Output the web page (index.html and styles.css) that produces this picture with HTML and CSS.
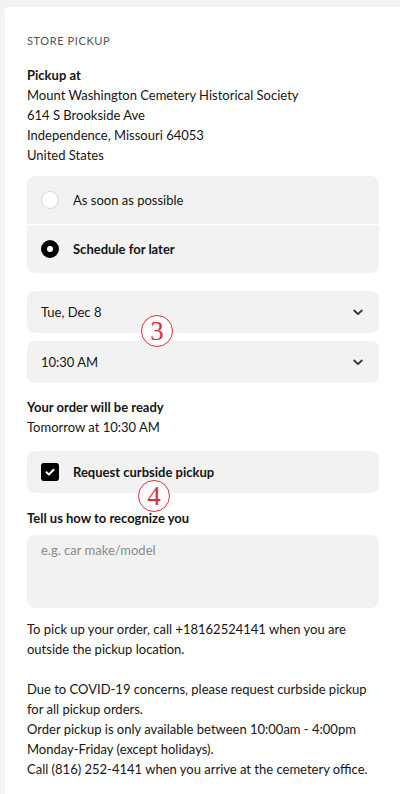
FILE: index.html
```html
<!DOCTYPE html>
<html lang="en">
<head>
  <meta charset="UTF-8">
  <title>Store Pickup</title>
  <link rel="stylesheet" href="styles.css">
</head>
<body>
  <div class="card">
    <div class="eyebrow">STORE PICKUP</div>

    <div class="address">
      <div class="strong">Pickup at</div>
      <div>Mount Washington Cemetery Historical Society</div>
      <div>614 S Brookside Ave</div>
      <div>Independence, Missouri 64053</div>
      <div>United States</div>
    </div>

    <div class="radios">
      <div class="radio-row">
        <span class="radio"></span>
        <span>As soon as possible</span>
      </div>
      <div class="radio-row">
        <span class="radio checked"></span>
        <span class="strong">Schedule for later</span>
      </div>
    </div>

    <div class="select">
      <span>Tue, Dec 8</span>
      <svg width="10" height="7" viewBox="0 0 10 7"><path d="M1.2 1.5l3.8 3.6 3.8-3.6" fill="none" stroke="#333" stroke-width="1.8" stroke-linecap="round" stroke-linejoin="round"/></svg>
    </div>
    <div class="select second">
      <span>10:30 AM</span>
      <svg width="10" height="7" viewBox="0 0 10 7"><path d="M1.2 1.5l3.8 3.6 3.8-3.6" fill="none" stroke="#333" stroke-width="1.8" stroke-linecap="round" stroke-linejoin="round"/></svg>
    </div>

    <div class="ready">
      <div class="strong">Your order will be ready</div>
      <div>Tomorrow at 10:30 AM</div>
    </div>

    <div class="check-row">
      <span class="checkbox">
        <svg width="18" height="18" viewBox="0 0 18 18"><path d="M5.5 9.3l2.4 2.3 4.6-4.9" fill="none" stroke="#fff" stroke-width="2" stroke-linecap="round" stroke-linejoin="round"/></svg>
      </span>
      <span class="strong">Request curbside pickup</span>
    </div>

    <div class="label strong">Tell us how to recognize you</div>
    <div class="textarea">e.g. car make/model</div>

    <p class="note">To pick up your order, call +18162524141 when you are outside the pickup location.</p>
    <p class="note">Due to COVID-19 concerns, please request curbside pickup for all pickup orders.<br>
      Order pickup is only available between 10:00am - 4:00pm Monday-Friday (except holidays).<br>
      Call (816) 252-4141 when you arrive at the cemetery office.</p>
  </div>

  <span class="mark mark-3">3</span>
  <span class="mark mark-4">4</span>
</body>
</html>
```

FILE: styles.css
```css
body {
  margin: 0;
  background: #f3f3f3;
  font-family: "Lato", "Liberation Sans", sans-serif;
  font-size: 13px;
  line-height: 20px;
  color: #151515;
}
.card {
  margin: 7px 0 0 5px;
  padding: 27px 21px 20px 22px;
  background: #fff;
  border-radius: 4px 0 0 0;
}
.eyebrow {
  font-size: 11px;
  line-height: 14px;
  letter-spacing: 0.6px;
  color: #555;
}
.strong {
  font-weight: 700;
}
.address {
  margin-top: 17px;
}
.radios {
  margin-top: 11px;
  background: #f2f2f2;
  border-radius: 8px;
  overflow: hidden;
}
.radio-row {
  display: flex;
  align-items: center;
  gap: 14px;
  height: 48px;
  padding-left: 14px;
}
.radio-row + .radio-row {
  border-top: 1px solid #fff;
}
.radio {
  width: 16px;
  height: 16px;
  border: 1px solid #d8d8d8;
  border-radius: 50%;
  background: #fff;
}
.radio.checked {
  width: 6px;
  height: 6px;
  border: 6px solid #000;
}
.select {
  display: flex;
  align-items: center;
  justify-content: space-between;
  height: 42px;
  margin-top: 18px;
  padding: 0 16px 0 14px;
  background: #f2f2f2;
  border-radius: 8px;
}
.select.second {
  margin-top: 8px;
}
.ready {
  margin-top: 14px;
}
.check-row {
  display: flex;
  align-items: center;
  gap: 14px;
  height: 42px;
  margin-top: 14px;
  padding-left: 14px;
  background: #f2f2f2;
  border-radius: 8px;
}
.checkbox {
  display: flex;
  width: 18px;
  height: 18px;
  border-radius: 3px;
  background: #000;
}
.label {
  margin-top: 15px;
}
.textarea {
  height: 65px;
  margin-top: 7px;
  padding: 8px 14px 0;
  line-height: 14px;
  background: #f2f2f2;
  border-radius: 8px;
  color: #8a8a8a;
}
.note {
  margin: 11px 0 0;
}
.note + .note {
  margin-top: 20px;
}
.mark {
  position: absolute;
  width: 30px;
  height: 30px;
  border: 1.8px solid #d8323c;
  border-radius: 50%;
  background: #fff;
  color: #d8323c;
  font-family: "Liberation Serif", serif;
  font-size: 27px;
  line-height: 31px;
  text-align: center;
}
.mark-3 {
  left: 141px;
  top: 315px;
}
.mark-4 {
  left: 138px;
  top: 480px;
}
```
